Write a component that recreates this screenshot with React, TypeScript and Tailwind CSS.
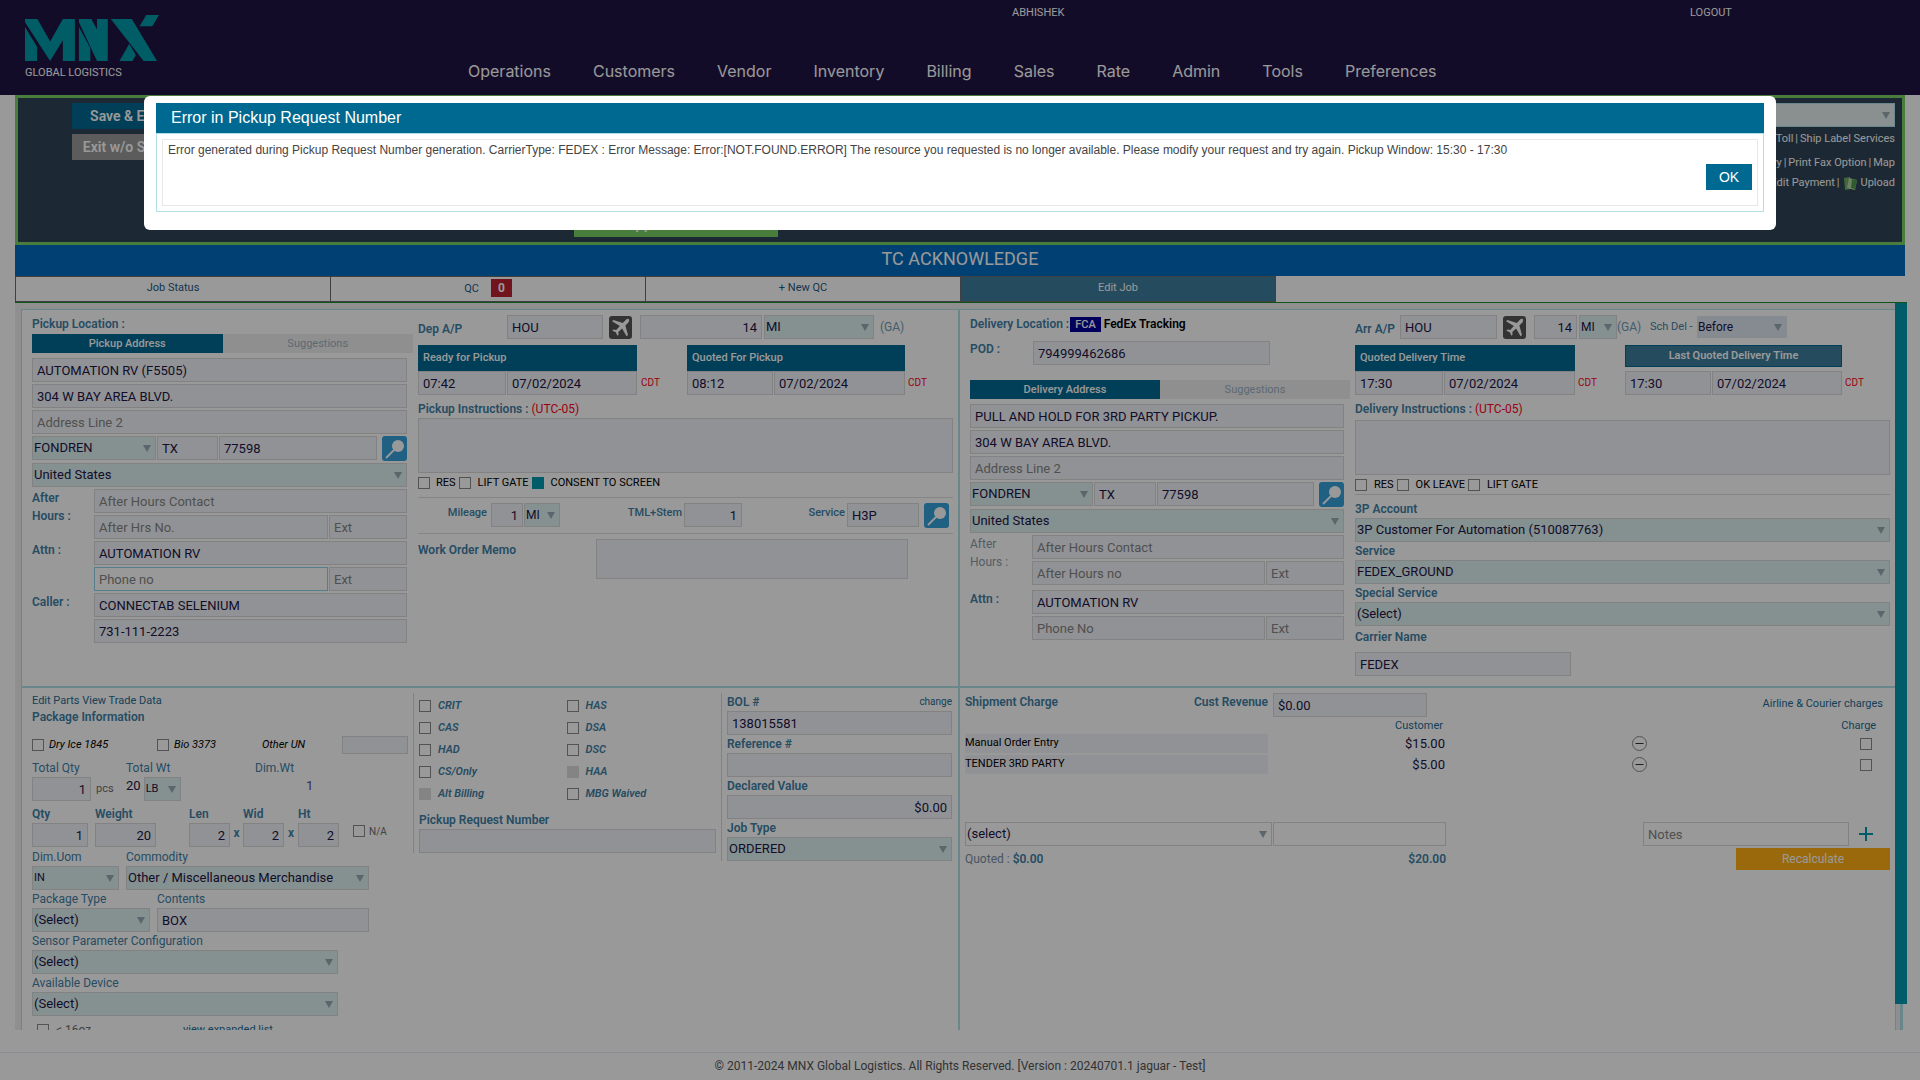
import React from "react";

const INPUT =
  "block h-6 w-full min-w-0 rounded-none border border-[#d9d9d9] bg-[#f2f4f8] px-[4px] text-[13px] leading-[22px] text-[#211446] placeholder:text-[#858585] outline-none";

function Field({
  label,
  id,
  value,
  placeholder,
  className = "",
}: {
  label?: string;
  id?: string;
  value?: string;
  placeholder?: string;
  className?: string;
}) {
  return (
    <input
      id={id}
      type="text"
      aria-label={label ?? placeholder}
      defaultValue={value}
      placeholder={placeholder}
      className={`${INPUT} ${className}`}
    />
  );
}

function Select({
  label,
  id,
  value,
  className = "",
  tone = "border border-[#d9d9d9] bg-[#def0f0] text-[13px] h-6",
}: {
  label?: string;
  id?: string;
  value: string;
  className?: string;
  tone?: string;
}) {
  return (
    <div className={`relative min-w-0 ${className}`}>
      <select
        id={id}
        aria-label={label}
        defaultValue={value}
        className={`block w-full appearance-none rounded-none pl-[1px] pr-4 text-[#211446] outline-none ${tone}`}
      >
        <option>{value}</option>
      </select>
      <svg viewBox="0 0 8 7" className="pointer-events-none absolute right-[5px] top-[9px] h-[7px] w-2" aria-hidden="true">
        <path d="M0 0h8L4 7z" fill="#97a8b5" />
      </svg>
    </div>
  );
}

function Check({
  label,
  id,
  checked,
  disabled,
}: {
  label?: string;
  id: string;
  checked?: boolean;
  disabled?: boolean;
}) {
  return (
    <input
      type="checkbox"
      id={id}
      aria-label={label}
      defaultChecked={checked}
      disabled={disabled}
      className="block size-3 shrink-0 appearance-none border border-[#8a8a8a] checked:border-[#0099b0] checked:bg-[#0099b0] disabled:border-[#dcdcdc] disabled:bg-[#dcdcdc]"
    />
  );
}

function Label({
  children,
  htmlFor,
  plain,
  className = "",
}: {
  children: React.ReactNode;
  htmlFor?: string;
  plain?: boolean;
  className?: string;
}) {
  const weight = plain ? "font-normal" : "font-semibold";
  return (
    <label htmlFor={htmlFor} className={`block whitespace-nowrap text-[12px] leading-[18px] text-[#3f80a5] ${weight} ${className}`}>
      {children}
    </label>
  );
}

function SearchButton({ label }: { label: string }) {
  return (
    <button type="button" aria-label={label} className="block h-[25px] w-full rounded-[3px] bg-[#36a1db]">
      <svg viewBox="0 0 25 25" className="h-[25px] w-full" aria-hidden="true">
        <circle cx="16" cy="10" r="6" fill="#fff" />
        <path d="M12 14L4 22" stroke="#fff" strokeWidth="1.8" />
      </svg>
    </button>
  );
}

function PlaneButton({ label }: { label: string }) {
  return (
    <button type="button" aria-label={label} className="block h-[23px] w-[23px] rounded-[3px] bg-[#555555]">
      <svg viewBox="0 0 24 24" className="size-[23px]" aria-hidden="true">
        <path
          d="M20.5 3.2c-.9-.6-2 0-2.8.8l-3.300 3.200L4.600 4.200 3.200 5.600l8.100 4.900-3.800 4-2.700-.4-1.300 1.200 3.600 1.700 1.700 3.700 1.200-1.200-.3-2.800 4-3.700 4.600 8.200 1.500-1.400-2.700-9.800 3.100-3.300c.8-.9 1.200-2.500.3-3.500z"
          fill="#fff"
        />
      </svg>
    </button>
  );
}

function AddressTabs({ active }: { active: string }) {
  return (
    <div className="grid h-[19px] grid-cols-2 text-[11px] leading-[19px]">
      <button type="button" className="bg-[#006992] font-medium text-white">
        {active}
      </button>
      <button type="button" className="bg-[#efefef] text-[#9bb0bf]">
        Suggestions
      </button>
    </div>
  );
}

function TimeBlock({
  title,
  name,
  time,
  date,
  cols,
  button,
}: {
  title: string;
  name: string;
  time: string;
  date: string;
  cols: string;
  button?: boolean;
}) {
  return (
    <div className="min-w-0">
      {button ? (
        <button
          type="button"
          className="mb-1 block h-[22px] w-full border border-[#006992] bg-[#3c7d9d] text-[11px] font-semibold leading-[20px] text-white"
        >
          {title}
        </button>
      ) : (
        <div className="h-[26px] bg-[#006992] pl-[5px] text-[11px] font-medium leading-[25px] text-white">{title}</div>
      )}
      <div className={`grid gap-px ${cols}`}>
        <Field label={`${name} time`} value={time} />
        <Field label={`${name} date`} value={date} />
      </div>
    </div>
  );
}

function Zone() {
  return <span className="self-end text-[10px] leading-[24px] text-[#ff0020]">CDT</span>;
}

function PickupAddress() {
  return (
    <div className="min-w-0">
      <Label className="leading-[20px]">Pickup Location :</Label>
      <AddressTabs active="Pickup Address" />
      <div className="mt-[5px] flex flex-col gap-0.5 pr-1.5">
        <Field label="Company" value="AUTOMATION RV (F5505)" />
        <Field label="Address Line 1" value="304 W BAY AREA BLVD." />
        <Field placeholder="Address Line 2" />
        <div className="flex">
          <div className="grid flex-1 grid-cols-[124fr_61fr_158fr] gap-px">
            <Select label="City" value="FONDREN" />
            <Field label="State" value="TX" />
            <Field label="Zip" value="77598" />
          </div>
          <div className="ml-[5px] w-[25px]">
            <SearchButton label="Find pickup address" />
          </div>
        </div>
        <Select label="Country" value="United States" />
        <div className="grid grid-cols-[62px_1fr] gap-y-0.5">
          <Label className="row-span-2 leading-[17px]">
            After
            <br />
            Hours :
          </Label>
          <Field placeholder="After Hours Contact" />
          <div className="grid grid-cols-[234fr_78fr] gap-px">
            <Field placeholder="After Hrs No." />
            <Field placeholder="Ext" />
          </div>
          <Label htmlFor="p-attn" className="row-span-2">
            Attn :
          </Label>
          <Field id="p-attn" label="Attn" value="AUTOMATION RV" />
          <div className="grid grid-cols-[234fr_78fr] gap-px">
            <Field placeholder="Phone no" className="border-[#8fd0ea]! bg-white!" />
            <Field placeholder="Ext" />
          </div>
          <Label htmlFor="p-caller" className="row-span-2">
            Caller :
          </Label>
          <Field id="p-caller" label="Caller" value="CONNECTAB SELENIUM" />
          <Field label="Caller phone" value="731-111-2223" />
        </div>
      </div>
    </div>
  );
}

function PickupDetails() {
  return (
    <div className="min-w-0 pr-[5px] pt-[5px]">
      <div className="grid h-6 grid-cols-[89fr_96fr_37fr_122fr_2fr_110fr_79fr]">
        <Label htmlFor="dep" className="leading-[28px]">
          Dep A/P
        </Label>
        <Field id="dep" label="Dep A/P" value="HOU" />
        <div className="flex justify-center pr-0.5 pt-px">
          <PlaneButton label="Departure airport" />
        </div>
        <Field label="Pickup distance" value="14" className="text-right" />
        <span />
        <Select label="Pickup distance unit" value="MI" />
        <span className="pl-1.5 text-[12px] leading-6 text-[#6f9bb5]">(GA)</span>
      </div>
      <div className="mt-1.5 grid h-[50px] grid-cols-[219fr_50fr_218fr_48fr]">
        <TimeBlock title="Ready for Pickup" name="Ready" time="07:42" date="07/02/2024" cols="grid-cols-[88fr_130fr]" />
        <div className="flex pl-1"><Zone /></div>
        <TimeBlock title="Quoted For Pickup" name="Quoted" time="08:12" date="07/02/2024" cols="grid-cols-[86fr_131fr]" />
        <div className="flex pl-[3px]"><Zone /></div>
      </div>
      <Label htmlFor="p-inst" className="mt-[5px]">
        Pickup Instructions : <span className="font-normal text-[#ff0020]">(UTC-05)</span>
      </Label>
      <textarea id="p-inst" className="block h-[55px] w-full resize-none border border-[#d9d9d9] bg-[#f2f4f8]" />
      <div className="mt-[3px] flex items-center gap-[3px] border-b border-[#dedede] pb-[7px] text-[11px] leading-[14px] text-black">
        <Check id="p-res" />
        <label htmlFor="p-res" className="pl-[3px]">RES</label>
        <Check id="p-lift" />
        <label htmlFor="p-lift" className="pl-1">LIFT GATE</label>
        <Check id="p-consent" checked />
        <label htmlFor="p-consent" className="pl-1">CONSENT TO SCREEN</label>
      </div>
      <div className="grid grid-cols-[69fr_4fr_32fr_1fr_36fr_122fr_2fr_58fr_103fr_2fr_72fr_5fr_25fr_4fr] border-b border-[#dedede] py-[5px]">
        <label htmlFor="mileage" className="text-right text-[11px] font-medium leading-5 text-[#3f80a5]">Mileage</label>
        <span />
        <Field id="mileage" label="Mileage" value="1" className="text-right" />
        <span />
        <Select label="Mileage unit" value="MI" tone="h-6 border border-[#d9d9d9] bg-[#def0f0] text-[12px]" />
        <label htmlFor="tml" className="text-right text-[11px] font-medium leading-5 text-[#3f80a5]">TML+Stem</label>
        <span />
        <Field id="tml" label="TML+Stem" value="1" className="text-right" />
        <label htmlFor="svc" className="text-right text-[11px] font-medium leading-5 text-[#3f80a5]">Service</label>
        <span />
        <Field id="svc" label="Service" value="H3P" />
        <span />
        <SearchButton label="Find service" />
      </div>
      <div className="mt-[5px] grid grid-cols-[178fr_312fr_45fr]">
        <Label htmlFor="memo" className="leading-[22px]">Work Order Memo</Label>
        <textarea id="memo" className="block h-10 w-full resize-none border border-[#d9d9d9] bg-[#f2f4f8]" />
      </div>
    </div>
  );
}

function DeliveryAddress() {
  return (
    <div className="min-w-0">
      <div className="flex h-5 items-center whitespace-nowrap">
        <Label>Delivery Location :</Label>
        <span className="ml-px bg-[#000099] px-[5px] text-[11px] font-medium leading-[15px] text-white">FCA</span>
        <a href="#tracking" className="ml-[3px] text-[12px] font-semibold text-black">
          FedEx Tracking
        </a>
      </div>
      <div className="mt-1.5 grid grid-cols-[63fr_237fr_80fr]">
        <Label htmlFor="pod">POD :</Label>
        <Field id="pod" label="POD" value="794999462686" className="mt-px" />
      </div>
      <div className="mt-[15px]">
        <AddressTabs active="Delivery Address" />
      </div>
      <div className="mt-[5px] flex flex-col gap-0.5 pr-1.5">
        <Field label="Delivery company" value="PULL AND HOLD FOR 3RD PARTY PICKUP." />
        <Field label="Delivery address line 1" value="304 W BAY AREA BLVD." />
        <Field placeholder="Address Line 2" />
        <div className="flex">
          <div className="grid flex-1 grid-cols-[123fr_62fr_157fr] gap-px">
            <Select label="Delivery city" value="FONDREN" />
            <Field label="Delivery state" value="TX" />
            <Field label="Delivery zip" value="77598" />
          </div>
          <div className="ml-[5px] w-[25px]">
            <SearchButton label="Find delivery address" />
          </div>
        </div>
        <Select label="Delivery country" value="United States" />
        <div className="grid grid-cols-[62px_1fr] gap-y-0.5">
          <Label plain className="row-span-2 leading-[18px] text-[#8a9cab]!">
            After
            <br />
            Hours :
          </Label>
          <Field placeholder="After Hours Contact" />
          <div className="grid grid-cols-[233fr_78fr] gap-px">
            <Field placeholder="After Hours no" />
            <Field placeholder="Ext" />
          </div>
        </div>
        <div className="mt-[3px] grid grid-cols-[62px_1fr] gap-y-0.5">
          <Label htmlFor="d-attn" className="row-span-2">Attn :</Label>
          <Field id="d-attn" label="Attn" value="AUTOMATION RV" />
          <div className="grid grid-cols-[233fr_78fr] gap-px">
            <Field placeholder="Phone No" />
            <Field placeholder="Ext" />
          </div>
        </div>
      </div>
    </div>
  );
}

function DeliveryDetails() {
  return (
    <div className="min-w-0 pt-[5px]">
      <div className="grid h-6 grid-cols-[45fr_97fr_37fr_43fr_2fr_38fr_33fr_47fr_90fr_103fr]">
        <Label htmlFor="arr" className="leading-[28px]">
          Arr A/P
        </Label>
        <Field id="arr" label="Arr A/P" value="HOU" />
        <div className="flex justify-center pr-0.5 pt-px">
          <PlaneButton label="Arrival airport" />
        </div>
        <Field label="Delivery distance" value="14" className="text-right" />
        <span />
        <Select label="Delivery distance unit" value="MI" tone="h-6 border border-[#d9d9d9] bg-[#def0f0] text-[12px]" />
        <span className="text-[12px] leading-6 text-[#6f9bb5]">(GA)</span>
        <label htmlFor="sch" className="whitespace-nowrap text-[11px] leading-6 text-[#3f80a5]">
          Sch Del -
        </label>
        <Select id="sch" value="Before" tone="mt-px h-[22px] bg-[#e0e6f2] text-[12px]" />
      </div>
      <div className="mt-1.5 grid h-[50px] grid-cols-[220fr_50fr_217fr_48fr]">
        <TimeBlock title="Quoted Delivery Time" name="Quoted delivery" time="17:30" date="07/02/2024" cols="grid-cols-[88fr_131fr]" />
        <div className="flex pl-[3px]"><Zone /></div>
        <TimeBlock button title="Last Quoted Delivery Time" name="Last quoted" time="17:30" date="07/02/2024" cols="grid-cols-[86fr_130fr]" />
        <div className="flex pl-[3px]"><Zone /></div>
      </div>
      <Label htmlFor="d-inst" className="mt-[5px]">
        Delivery Instructions : <span className="font-normal text-[#ff0020]">(UTC-05)</span>
      </Label>
      <textarea id="d-inst" className="mt-0.5 block h-[55px] w-full resize-none border border-[#d9d9d9] bg-[#f2f4f8]" />
      <div className="mt-[3px] flex items-center gap-[3px] border-b border-[#dedede] pb-0.5 text-[11px] leading-[14px] text-black">
        <Check id="d-res" />
        <label htmlFor="d-res" className="pl-1">RES</label>
        <Check id="d-ok" />
        <label htmlFor="d-ok" className="pl-1">OK LEAVE</label>
        <Check id="d-lift" />
        <label htmlFor="d-lift" className="pl-1">LIFT GATE</label>
      </div>
      <Label htmlFor="acct" className="mt-[5px]">3P Account</Label>
      <Select id="acct" value="3P Customer For Automation (510087763)" />
      <Label htmlFor="d-svc">Service</Label>
      <Select id="d-svc" value="FEDEX_GROUND" />
      <Label htmlFor="special">Special Service</Label>
      <Select id="special" value="(Select)" />
      <Label htmlFor="carrier" className="mb-1.5 mt-0.5">Carrier Name</Label>
      <Field id="carrier" label="Carrier Name" value="FEDEX" className="w-[216px]!" />
    </div>
  );
}

function PackageInfo() {
  return (
    <div className="min-w-0">
      <div className="whitespace-nowrap text-[11px] leading-[15px] text-[#1f6d94]">
        <a href="#parts">Edit Parts</a> <a href="#trade">View Trade Data</a>
      </div>
      <h2 className="text-[12px] font-semibold leading-[18px] text-[#3f80a5]">Package Information</h2>
      <div className="mt-2.5 grid grid-cols-[125fr_105fr_80fr_66fr_5fr] items-center text-[11px] italic text-black">
        <span className="flex items-center gap-[5px]">
          <Check id="dryice" />
          <label htmlFor="dryice">Dry Ice 1845</label>
        </span>
        <span className="flex items-center gap-[5px]">
          <Check id="bio" />
          <label htmlFor="bio">Bio 3373</label>
        </span>
        <label htmlFor="un">Other UN</label>
        <Field id="un" label="Other UN" className="h-[18px]!" />
      </div>
      <div className="mt-[5px] grid grid-cols-[94fr_129fr_158fr]">
        <Label plain htmlFor="tq">Total Qty</Label>
        <Label plain htmlFor="tw">Total Wt</Label>
        <Label plain>Dim.Wt</Label>
        <div className="flex items-center gap-[5px]">
          <div className="w-[59px]">
            <Field id="tq" label="Total Qty" value="1" className="text-right" />
          </div>
          <span className="text-[11px] text-[#6d6d6d]">pcs</span>
        </div>
        <div className="flex gap-[3px]">
          <span className="text-[13px] leading-[18px] text-[#211446]">20</span>
          <Select id="tw" value="LB" className="w-[37px]" tone="h-6 border border-[#d9d9d9] bg-[#def0f0] text-[11px]" />
        </div>
        <span className="pl-[51px] text-[13px] leading-[18px] text-[#5a4a8a]">1</span>
      </div>
      <div className="mb-px mt-1 grid grid-cols-[56fr_7fr_61fr_33fr_41fr_13fr_41fr_14fr_41fr_14fr_60fr]">
        <Label htmlFor="qty" className="col-span-2">Qty</Label>
        <Label htmlFor="wt" className="col-span-2">Weight</Label>
        <Label htmlFor="len" className="col-span-2">Len</Label>
        <Label htmlFor="wid" className="col-span-2">Wid</Label>
        <Label htmlFor="ht" className="col-span-3">Ht</Label>
        <Field id="qty" label="Qty" value="1" className="text-right" />
        <span />
        <Field id="wt" label="Weight" value="20" className="text-right" />
        <span />
        <Field id="len" label="Len" value="2" className="text-right" />
        <Label className="text-center leading-[21px]">x</Label>
        <Field id="wid" label="Wid" value="2" className="text-right" />
        <Label className="text-center leading-[21px]">x</Label>
        <Field id="ht" label="Ht" value="2" className="text-right" />
        <span />
        <span className="flex h-4 items-center gap-1 text-[10px] text-[#6d6d6d]">
          <Check id="na" />
          <label htmlFor="na">N/A</label>
        </span>
      </div>
      <div className="grid grid-cols-[87fr_7fr_243fr_44fr]">
        <Label plain htmlFor="uom" className="col-span-2">Dim.Uom</Label>
        <Label plain htmlFor="com" className="col-span-2">Commodity</Label>
        <Select id="uom" value="IN" tone="h-6 border border-[#d9d9d9] bg-[#def0f0] text-[11px]" />
        <span />
        <Select id="com" value="Other / Miscellaneous Merchandise" />
      </div>
      <div className="grid grid-cols-[118fr_7fr_212fr_44fr]">
        <Label plain htmlFor="ptype" className="col-span-2">Package Type</Label>
        <Label plain htmlFor="contents" className="col-span-2">Contents</Label>
        <Select id="ptype" value="(Select)" />
        <span />
        <Field id="contents" label="Contents" value="BOX" />
      </div>
      <div className="pr-[75px]">
        <Label plain htmlFor="sensor">Sensor Parameter Configuration</Label>
        <Select id="sensor" value="(Select)" />
        <Label plain htmlFor="device">Available Device</Label>
        <Select id="device" value="(Select)" />
      </div>
      <div className="mt-1.5 flex items-center pl-[5px] text-[12px] leading-4 text-[#6d6d6d]">
        <Check id="oz" />
        <label htmlFor="oz" className="w-[134px] pl-[7px]">&lt; 16oz</label>
        <a href="#expanded" className="text-[11px] text-[#1f6d94]">view expanded list</a>
      </div>
    </div>
  );
}

const FLAGS: [string, string, boolean?][] = [
  ["crit", "CRIT"],
  ["has", "HAS"],
  ["cas", "CAS"],
  ["dsa", "DSA"],
  ["had", "HAD"],
  ["dsc", "DSC"],
  ["cso", "CS/Only"],
  ["haa", "HAA", true],
  ["alt", "Alt Billing", true],
  ["mbg", "MBG Waived"],
];

function Flags() {
  return (
    <div className="min-w-0 self-start border-l border-[#d9d9d9] px-[5px] pt-0.5">
      <div className="grid grid-cols-[148fr_150fr]">
        {FLAGS.map(([id, text, disabled]) => (
          <span key={id} className="flex h-[22px] items-center gap-[7px] text-[11px] font-semibold italic text-[#3f80a5]">
            <Check id={id} disabled={disabled} />
            <label htmlFor={id}>{text}</label>
          </span>
        ))}
      </div>
      <Label htmlFor="prn" className="mt-1.5">Pickup Request Number</Label>
      <Field id="prn" label="Pickup Request Number" />
    </div>
  );
}

function Reference() {
  return (
    <div className="min-w-0 self-start border-l border-[#d9d9d9] pl-[5px] pr-1.5">
      <div className="flex justify-between">
        <Label htmlFor="bol">BOL #</Label>
        <a href="#change" className="text-[10px] leading-[18px] text-[#1f6d94]">change</a>
      </div>
      <Field id="bol" label="BOL #" value="138015581" />
      <Label htmlFor="ref">Reference #</Label>
      <Field id="ref" label="Reference #" />
      <Label htmlFor="decl">Declared Value</Label>
      <Field id="decl" label="Declared Value" value="$0.00" className="text-right" />
      <Label htmlFor="jobtype">Job Type</Label>
      <Select id="jobtype" value="ORDERED" />
    </div>
  );
}

const CHARGES = [
  ["Manual Order Entry", "$15.00"],
  ["TENDER 3RD PARTY", "$5.00"],
];

function Charges() {
  return (
    <section className="min-w-0 pl-[5px] pr-[5px] pt-[5px]">
      <div className="grid grid-cols-[228fr_75fr_5fr_154fr_463fr]">
        <Label>Shipment Charge</Label>
        <Label htmlFor="rev" className="text-right">Cust Revenue</Label>
        <span />
        <Field id="rev" label="Cust Revenue" value="$0.00" />
        <a href="#airline" className="pr-[7px] text-right text-[11px] leading-[22px] text-[#1f6d94]">
          Airline &amp; Courier charges
        </a>
      </div>
      <table className="w-full table-fixed border-collapse">
        <colgroup>
          <col className="w-[32.8%]" />
          <col className="w-[19.2%]" />
          <col className="w-[41.9%]" />
          <col />
        </colgroup>
        <thead>
          <tr className="h-4 text-[11px] leading-[15px] text-[#1f6d94]">
            <th />
            <th className="pr-[3px] text-right font-normal">Customer</th>
            <th />
            <th className="pr-1.5 text-center font-normal">Charge</th>
          </tr>
        </thead>
        <tbody>
          {CHARGES.map(([name, amount]) => (
            <tr key={name} className="h-[21px]">
              <td className="p-0">
                <div className="h-[19px] bg-[#f2f4f8] text-[11px] leading-[17px] text-black">{name}</div>
              </td>
              <td className="p-0 pr-px text-right text-[13px] leading-[19px] text-[#211446]">{amount}</td>
              <td className="p-0">
                <button type="button" aria-label={`Remove ${name}`} className="mx-auto block size-[15px]">
                  <svg viewBox="0 0 15 15" className="size-[15px]" fill="none" aria-hidden="true">
                    <circle cx="7.500" cy="7.500" r="7" stroke="#8a8a8a" />
                    <path d="M3.500 7.500h8" stroke="#333" />
                  </svg>
                </button>
              </td>
              <td className="p-0 pl-2">
                <div className="flex justify-center">
                  <Check id={`charge-${amount}`} label={`Charge ${name}`} />
                </div>
              </td>
            </tr>
          ))}
        </tbody>
      </table>
      <div className="mt-[47px] grid grid-cols-[307fr_1fr_173fr_197fr_206fr_41fr]">
        <Select label="Charge type" value="(select)" tone="h-6 border border-[#d9d9d9] bg-white text-[13px]" />
        <span />
        <Field label="Charge amount" className="bg-white!" />
        <span />
        <Field placeholder="Notes" className="bg-white!" />
        <button type="button" aria-label="Add charge" className="flex items-center pl-2.5">
          <svg viewBox="0 0 14 14" className="size-3.5" aria-hidden="true">
            <path d="M7 0v14M0 7h14" stroke="#0099b0" strokeWidth="2" />
          </svg>
        </button>
      </div>
      <div className="mt-0.5 grid grid-cols-[240fr_241fr_290fr_154fr] text-[12px] leading-[22px] text-[#3f80a5]">
        <span className="text-[#7d8ea6]">
          Quoted : <b className="font-semibold text-[#3f80a5]">$0.00</b>
        </span>
        <b className="text-right font-semibold">$20.00</b>
        <span />
        <button type="button" className="bg-[#ffaf14] text-[12px] text-white">
          Recalculate
        </button>
      </div>
    </section>
  );
}

const NAV = ["Operations", "Customers", "Vendor", "Inventory", "Billing", "Sales", "Rate", "Admin", "Tools", "Preferences"];

function Header() {
  return (
    <header className="flex h-[95px] bg-[#211443] text-white">
      <a href="#home" aria-label="MNX Global Logistics" className="block w-[428px] shrink-0 pl-[25px] pt-[15px]">
        <svg viewBox="30 21 400 139" className="h-[46px] w-[134px]" fill="#0099a8" preserveAspectRatio="none" aria-hidden="true">
          <path d="M30 33h37l38 68 38-68h36v127h-36V97l-38 63L30 43z" />
          <path d="M30 57l36 60v43H30z" />
          <path d="M191 33h37l17 32V33h32v127h-32L191 43z" />
          <path d="M191 57l34 64v39h-34z" />
          <path d="M286 33h63l75 127h-40z" />
          <path d="M312 160l29-52 20 34-10 18z" />
          <path d="M392 21h38l-20 34h-38z" />
        </svg>
        <span className="mt-1.5 block text-[11px] leading-[11px]">GLOBAL LOGISTICS</span>
      </a>
      <div className="min-w-0 flex-1">
        <div className="grid h-[25px] grid-cols-[584fr_678fr_230fr] text-[11px] leading-[25px]">
          <span />
          <span>ABHISHEK</span>
          <a href="#logout">LOGOUT</a>
        </div>
        <nav className="mt-[34px] flex gap-[42px] pl-10 text-[16px] leading-6">
          {NAV.map((item) => (
            <a key={item} href={`#${item}`} className="font-['Inter','Roboto',sans-serif]">
              {item}
            </a>
          ))}
        </nav>
      </div>
    </header>
  );
}

function JobBar() {
  return (
    <div className="grid h-[150px] grid-cols-[549fr_204fr_817fr_300fr] border-[3px] border-[#7ad065] bg-[#2f4455] px-[7px] pt-[5px]">
      <div className="ml-[47px] flex w-[106px] flex-col gap-[5px] text-[14px] font-semibold text-white">
        <button type="button" className="h-[26px] bg-[#006992]">Save &amp; Exit</button>
        <button type="button" className="h-[26px] bg-[#999999]">Exit w/o Save</button>
      </div>
      <button
        type="button"
        className="mt-[108px] h-[26px] bg-[#7ad065] text-[15px] font-semibold leading-[26px] text-white"
      >
        Appt Customer
      </button>
      <span />
      <div className="flex flex-col items-end text-[11px] text-white">
        <Select label="Job options" value="" className="w-full" tone="h-6 border border-[#b0e0e6] bg-[#e6f0f0]" />
        <div className="flex gap-0.5 pt-[3px] leading-[18px]">
          <a href="#toll">Toll</a>|<a href="#ship">Ship Label Services</a>
        </div>
        <div className="flex gap-0.5 pt-1.5 leading-[18px]">
          <a href="#history">History</a>|<a href="#fax">Print Fax Option</a>|<a href="#map">Map</a>
        </div>
        <div className="flex gap-0.5 pt-0.5 leading-[18px]">
          <a href="#payment">Edit Payment</a>|
          <a href="#upload" className="flex items-center gap-[3px] pl-0.5">
            <svg viewBox="0 0 14 13" className="h-[13px] w-3.5" aria-hidden="true">
              <path d="M0 1l6-1 1 12-6 1z" fill="#6fae62" />
              <path d="M5 1l8 2-2 10-8-2z" fill="#b6d8ab" />
              <path d="M8 2l5 1-2 9-4-1z" fill="#4f9a48" />
            </svg>
            Upload
          </a>
        </div>
      </div>
    </div>
  );
}

function JobTabs() {
  const tab = "flex items-start justify-center border border-[#6b6b6b] -mr-px text-[11px] leading-[21px] h-[26px]";
  return (
    <div className="grid h-[26px] grid-cols-6">
      <button type="button" className={`${tab} bg-white text-[#1f5a85]`}>Job Status</button>
      <button type="button" className={`${tab} gap-3 bg-white pt-px text-[#1f5a85]`}>
        QC
        <span className="mt-px w-[21px] bg-[#be2232] text-center text-[12px] font-bold leading-[18px] text-white">0</span>
      </button>
      <button type="button" className={`${tab} bg-white text-[#1f5a85]`}>+ New QC</button>
      <button type="button" className={`${tab} bg-[#3c7d9d] text-white`}>Edit Job</button>
    </div>
  );
}

function ErrorDialog() {
  return (
    <div className="fixed inset-0 z-10 bg-black/40 px-36 pt-24">
      <div
        role="dialog"
        aria-modal="true"
        aria-labelledby="error-title"
        className="h-[134px] rounded-md bg-white px-3 pt-[7px] font-['Liberation_Sans',sans-serif]"
      >
        <h1 id="error-title" className="h-[30px] bg-[#006991] pl-[15px] text-[16px] leading-[29px] text-white">
          Error in Pickup Request Number
        </h1>
        <div className="border border-[#b0dfe6] p-[5px]">
          <div className="h-[67px] border border-[#e8e8ea] px-[5px] pt-px">
            <p className="text-[12px] leading-[18px] text-[#444]">
              Error generated during Pickup Request Number generation. CarrierType: FEDEX : Error Message:
              Error:[NOT.FOUND.ERROR] The resource you requested is no longer available. Please modify your request and
              try again. Pickup Window: 15:30 - 17:30
            </p>
            <div className="mt-[5px] flex justify-end">
              <button type="button" className="h-[26px] w-[46px] bg-[#006992] text-[14px] text-white">
                OK
              </button>
            </div>
          </div>
        </div>
      </div>
    </div>
  );
}

export default function App() {
  return (
    <div className="min-h-screen bg-white font-['Roboto',sans-serif]">
      <Header />
      <main className="px-[15px]">
        <JobBar />
        <div className="h-[31px] bg-[#006cbf] text-center text-[18px] leading-7 text-white">TC ACKNOWLEDGE</div>
        <JobTabs />
        <div className="-mr-0.5 flex h-[728px] overflow-hidden">
          <div className="w-1.5 shrink-0 border-t border-[#1e8a30] bg-[#eeeeee]" />
          <div className="min-w-0 flex-1">
            <div className="h-[7px] border-t border-[#1e8a30] bg-[#eeeeee]" />
            <div className="grid grid-cols-[938fr_935fr] border-l border-t border-[#b0e0e6]">
              <section className="grid h-[378px] grid-cols-[381fr_5fr_540fr] border-b-2 border-r-2 border-[#b0e0e6] pl-2.5">
                <div className="pt-1"><PickupAddress /></div>
                <span />
                <PickupDetails />
              </section>
              <section className="grid h-[378px] grid-cols-[380fr_5fr_535fr] border-b-2 border-[#b0e0e6] pl-2.5 pr-[5px]">
                <div className="pt-1"><DeliveryAddress /></div>
                <span />
                <DeliveryDetails />
              </section>
              <section className="grid h-[350px] grid-cols-[381fr_308fr_237fr] border-r-2 border-[#b0e0e6] pl-2.5 pt-[5px]">
                <PackageInfo />
                <Flags />
                <Reference />
              </section>
              <Charges />
            </div>
          </div>
          <div className="w-3 shrink-0 border-t border-[#1e8a30]">
            <div className="h-[701px] bg-[#0099b0]" />
            <div className="h-[26px] w-2 border-l border-r-[3px] border-[#b0e0e6] bg-[#eeeeee]" />
          </div>
        </div>
      </main>
      <footer className="mt-[22px] border-t border-[#e8e8f2] text-center text-[12px] leading-[27px] text-[#555]">
        © 2011-2024 MNX Global Logistics. All Rights Reserved. [Version : 20240701.1 jaguar - Test]
      </footer>
      <ErrorDialog />
    </div>
  );
}
